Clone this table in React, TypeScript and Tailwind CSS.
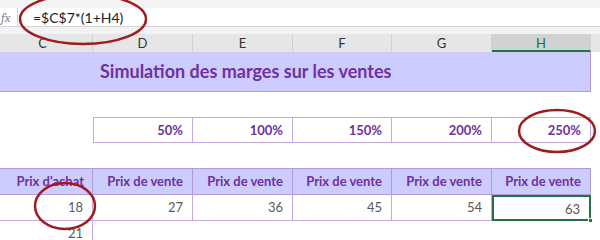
import React from 'react';

const cols = ['C', 'D', 'E', 'F', 'G', 'H'];
const widths = ['w-[93px]', 'w-[100px]', 'w-[100px]', 'w-[99px]', 'w-[100px]', 'w-[99px]'];
const pcts = ['50%', '100%', '150%', '200%', '250%'];
const prices = ['27', '36', '45', '54', '63'];

const App: React.FC = () => {
  return (
    <div
      className="relative w-[600px] h-[240px] overflow-hidden bg-white"
      style={{ fontFamily: 'Lato, "Open Sans", sans-serif' }}
    >
      {/* formula bar */}
      <div className="h-[8px] bg-[#f3f3f3]" />
      <div className="flex h-[19px] border-b border-[#d4d4d4] bg-white">
        <div className="w-[18px] border-r border-[#d4d4d4] text-[13px] italic text-[#8a8a8a] leading-[19px] pl-[1px] font-serif">
          fx
        </div>
        <div className="pl-[15px] text-[14px] leading-[19px] text-[#222]">=$C$7*(1+H4)</div>
      </div>
      <div className="h-[7px] bg-[#f3f3f3]" />

      {/* column headers */}
      <div className="flex h-[18px] bg-[#e6e6e6] text-[13px] leading-[18px] text-[#333]">
        {cols.map((c, i) => (
          <div
            key={c}
            className={`${widths[i]} text-center border-r border-[#d0d0d0] ${
              c === 'H' ? 'bg-[#d2d2d2] border-b-2 border-b-[#217346] text-[#217346]' : ''
            }`}
          >
            <span className={c === 'C' ? 'pr-[7px]' : ''}>{c}</span>
          </div>
        ))}
        <div className="flex-1" />
      </div>

      {/* title banner */}
      <div className="flex">
        <div className="w-[591px] h-[40px] bg-[#ccccff] border-b border-r border-[#b19cd9] flex items-center pl-[100px]">
          <span className="text-[18px] font-bold text-[#7030a0]">
            Simulation des marges sur les ventes
          </span>
        </div>
      </div>

      {/* percent row */}
      <div className="flex mt-[25px] h-[26px]">
        <div className="w-[93px]" />
        {pcts.map((p, i) => (
          <div
            key={p}
            className={`${widths[i + 1]} border-y border-r border-[#c5a8e0] ${i === 0 ? 'border-l' : ''} text-right pr-[9px] text-[13px] font-bold text-[#7030a0] leading-[24px]`}
          >
            {p}
          </div>
        ))}
      </div>

      {/* header row */}
      <div className="flex mt-[25px] h-[27px] bg-[#ccccff] w-[591px] border-y border-[#b19cd9]">
        <div className="w-[93px] border-r border-[#b19cd9] text-right pr-[8px] text-[13px] font-bold text-[#7030a0] leading-[25px]">
          Prix d'achat
        </div>
        {prices.map((_, i) => (
          <div
            key={i}
            className={`${widths[i + 1]} border-r border-[#b19cd9] text-right pr-[9px] text-[13px] font-bold text-[#7030a0] leading-[25px]`}
          >
            Prix de vente
          </div>
        ))}
      </div>

      {/* data row */}
      <div className="flex h-[26px] w-[593px]">
        <div className="w-[93px] border-r border-b border-[#c5a8e0] text-right pr-[9px] text-[13px] text-[#595959] leading-[25px]">
          18
        </div>
        {prices.map((v, i) => (
          <div
            key={v}
            className={`${widths[i + 1]} relative text-right pr-[9px] text-[13px] text-[#595959] leading-[25px] ${
              i === 4 ? 'border-2 border-[#217346] leading-[22px] pr-[8px]' : 'border-r border-b border-[#c5a8e0]'
            }`}
          >
            {v}
            {i === 4 && <span className="absolute right-[-4px] bottom-[-4px] w-[5px] h-[5px] bg-[#217346] border border-white" />}
          </div>
        ))}
      </div>

      {/* next row */}
      <div className="flex h-[26px]">
        <div className="w-[93px] border-r border-[#c5a8e0] text-right pr-[9px] text-[13px] text-[#595959] leading-[25px]">
          21
        </div>
      </div>

      {/* annotation ellipses */}
      <svg className="absolute inset-0 pointer-events-none" width="600" height="240">
        <ellipse cx="83" cy="19" rx="63" ry="25" fill="none" stroke="#9e1b1f" strokeWidth="2.5" />
        <ellipse cx="557" cy="131" rx="38" ry="21" fill="none" stroke="#9e1b1f" strokeWidth="2.5" />
        <ellipse cx="65" cy="206" rx="30" ry="23" fill="none" stroke="#9e1b1f" strokeWidth="2.5" />
      </svg>
    </div>
  );
};

export default App;
